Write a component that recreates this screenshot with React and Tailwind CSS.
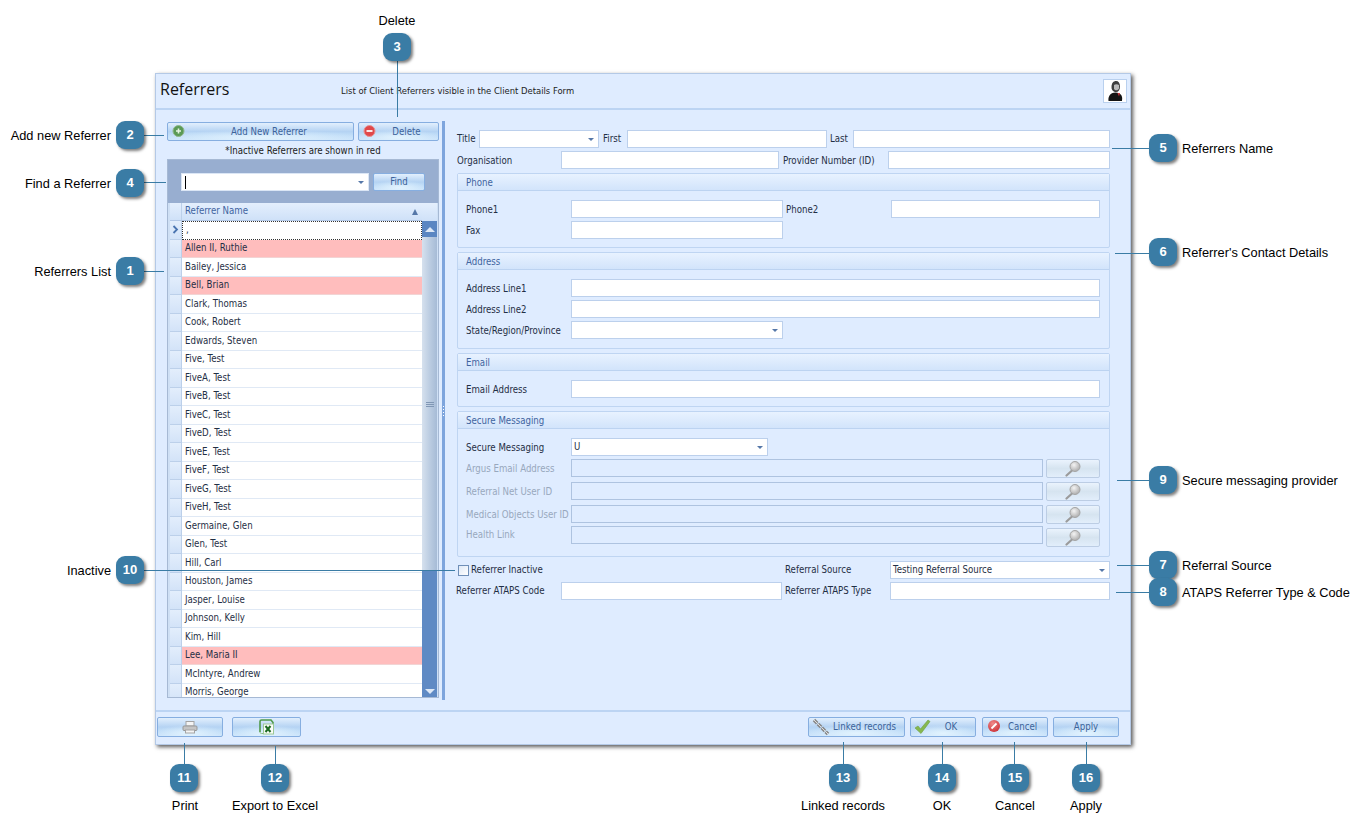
import React from 'react'

const names = [
  [',', 0], ['Allen II, Ruthie', 1], ['Bailey, Jessica', 0], ['Bell, Brian', 1], ['Clark, Thomas', 0], ['Cook, Robert', 0],
  ['Edwards, Steven', 0], ['Five, Test', 0], ['FiveA, Test', 0], ['FiveB, Test', 0], ['FiveC, Test', 0], ['FiveD, Test', 0],
  ['FiveE, Test', 0], ['FiveF, Test', 0], ['FiveG, Test', 0], ['FiveH, Test', 0], ['Germaine, Glen', 0], ['Glen, Test', 0],
  ['Hill, Carl', 0], ['Houston, James', 0], ['Jasper, Louise', 0], ['Johnson, Kelly', 0], ['Kim, Hill', 0], ['Lee, Maria II', 1],
  ['McIntyre, Andrew', 0], ['Morris, George', 0],
]

// callouts sit on top of the screenshot, so these are placed by hand
const badges = [
  ['2', 'left-[116px] top-[121px]'], ['4', 'left-[116px] top-[169px]'], ['1', 'left-[116px] top-[257px]'], ['10', 'left-[116px] top-[556px]'],
  ['3', 'left-[383px] top-[33px]'], ['5', 'left-[1149px] top-[134px]'], ['6', 'left-[1149px] top-[238px]'], ['9', 'left-[1149px] top-[466px]'],
  ['7', 'left-[1149px] top-[551px]'], ['8', 'left-[1149px] top-[578px]'], ['11', 'left-[170px] top-[764px]'], ['12', 'left-[261px] top-[764px]'],
  ['13', 'left-[829px] top-[764px]'], ['14', 'left-[928px] top-[764px]'], ['15', 'left-[1001px] top-[764px]'], ['16', 'left-[1072px] top-[764px]'],
]

const lines = [
  'left-[144px] top-[135px] w-[20px] h-px', 'left-[144px] top-[182px] w-[22px] h-px', 'left-[144px] top-[271px] w-[20px] h-px',
  'left-[144px] top-[570px] w-[311px] h-px', 'left-[397px] top-[60px] w-px h-[57px]', 'left-[1112px] top-[148px] w-[38px] h-px',
  'left-[1115px] top-[253px] w-[35px] h-px', 'left-[1117px] top-[480px] w-[33px] h-px', 'left-[1117px] top-[565px] w-[33px] h-px',
  'left-[1116px] top-[592px] w-[34px] h-px', 'left-[184px] top-[743px] w-px h-[22px]', 'left-[275px] top-[746px] w-px h-[19px]',
  'left-[843px] top-[742px] w-px h-[23px]', 'left-[942px] top-[742px] w-px h-[23px]', 'left-[1014px] top-[742px] w-px h-[23px]',
  'left-[1086px] top-[742px] w-px h-[23px]',
]

const leftLabels = [
  ['Add new Referrer', 'top-[128px]'], ['Find a Referrer', 'top-[176px]'], ['Referrers List', 'top-[264px]'], ['Inactive', 'top-[563px]'],
]
const rightLabels = [
  ['Referrers Name', 'top-[141px]'], ["Referrer's Contact Details", 'top-[245px]'], ['Secure messaging provider', 'top-[473px]'],
  ['Referral Source', 'top-[558px]'], ['ATAPS Referrer Type & Code', 'top-[585px]'],
]
const bottomLabels = [
  ['Print', 'left-[135px]'], ['Export to Excel', 'left-[225px]'], ['Linked records', 'left-[793px]'], ['OK', 'left-[892px]'],
  ['Cancel', 'left-[965px]'], ['Apply', 'left-[1036px]'],
]

const Label = ({ children, w }) => (
  <span className={`shrink-0 whitespace-nowrap text-[#1f2f45] ${w}`}>{children}</span>
)

const Input = ({ w, dim, children, className = '' }) => (
  <div className={`relative h-[18px] shrink-0 border flex items-center pl-[2px] text-[#1f2f45] ${w} ${dim ? 'bg-[#dfecff] border-[#aec3e0]' : 'bg-white border-[#bcd0ec]'} ${className}`}>
    {children}
  </div>
)

const Arrow = () => (
  <span className="absolute right-[4px] top-[7px] w-0 h-0 border-x-[3px] border-x-transparent border-t-[3px] border-t-[#5577a8]" />
)

const Button = ({ w, h = 'h-[20px]', icon, children }) => (
  <button className={`relative shrink-0 flex items-center justify-center rounded-[2px] border border-[#86aee0] bg-[radial-gradient(ellipse_55%_45%_at_50%_85%,#e2f3fe,transparent),linear-gradient(#e2effd,#b5d3f3_50%,#bbd9f6_62%,#cde5fb)] text-[#3c639a] ${w} ${h}`}>
    {icon}
    {children}
  </button>
)

const Group = ({ title, h, children }) => (
  <div className={`mt-[4px] border border-[#bfd5f2] rounded-[2px] ${h}`}>
    <div className="h-[17px] pl-[8px] pt-[3px] flex items-center bg-gradient-to-b from-[#e8f2ff] to-[#d2e4fb] border-b border-[#bcd3f1] text-[#3f64a0]">{title}</div>
    <div className="pl-[113px] relative">{children}</div>
  </div>
)

const Row = ({ label, className = '', children }) => (
  <div className={`flex items-center -ml-[105px] ${className}`}>
    <Label w="w-[105px] mt-[2px]">{label}</Label>
    {children}
  </div>
)

const Find = () => (
  <svg width="24" height="17" viewBox="0 0 24 17">
    <defs>
      <radialGradient id="lens" cx="0.4" cy="0.35" r="0.7"><stop offset="0" stopColor="#f4f4f4" /><stop offset="1" stopColor="#a9a9a9" /></radialGradient>
    </defs>
    <path d="M11 10.5 5.5 15.5" stroke="#9b9b9b" strokeWidth="2.2" strokeLinecap="round" />
    <circle cx="14" cy="6.5" r="5" fill="url(#lens)" stroke="#a5a5a5" />
  </svg>
)

const DimRow = ({ label, inputClass = '', labelClass = 'pt-[2px]' }) => (
  <div className="flex items-start h-[23px] -ml-[105px]">
    <span className={`w-[105px] h-[18px] flex items-center text-[#98a8bd] whitespace-nowrap ${labelClass}`}>{label}</span>
    <Input w="w-[472px]" dim className={inputClass} />
    <div className="ml-[3px] w-[54px] h-[19px] rounded-[2px] border border-[#bccde4] bg-gradient-to-b from-[#eaf3fd] via-[#d6e4f0] to-[#e2eefb] flex items-center justify-center">
      <Find />
    </div>
  </div>
)

function App() {
  return (
    <div className="relative w-[1366px] h-[829px] overflow-hidden bg-white font-['DejaVu_Sans_Condensed','Liberation_Sans',sans-serif] text-[9.6px]">
      <div className="pt-[73px] pl-[155px]">
        <div className="w-[976px] h-[672px] flex flex-col bg-[#dfecff] border border-[#b4c9e6] shadow-[2px_2px_4px_rgba(0,0,0,0.65)]">

          {/* title bar */}
          <div className="h-[36px] shrink-0 flex items-center pl-[4px] pr-[3px] border-b-2 border-[#bcd4f3]">
            <span className="w-[181px] -mt-[4px] font-['Open_Sans',sans-serif] font-medium text-[16px] text-[#111]">Referrers</span>
            <span className="text-[#222] text-[9.4px] flex-1">List of Client Referrers visible in the Client Details Form</span>
            <div className="w-[24px] h-[24px] bg-white border border-[#b9d0ee] flex items-center justify-center">
              <svg width="17" height="22" viewBox="0 0 17 22">
                <path d="M4.5 7c0-4 2-6 4.5-6s4 2 4 5.5S11.5 12 9 12 4.5 10.5 4.5 7z" fill="#3d3d3d" />
                <path d="M7 5c1-1 3.5-1 5 0v3.5c-.8 2-3.7 2.5-5 .5z" fill="#b9b9b9" />
                <path d="M1.5 21c0-1.500-.5-3 1-5.500 1-1.800 3.500-3 6-3s5 1.200 6 3c1.200 2.500.5 4 .5 5.500z" fill="#141414" />
                <path d="M10.5 13h2.500l-1 3.500z" fill="#c8333a" />
              </svg>
            </div>
          </div>

          {/* body */}
          <div className="flex-1 flex min-h-0 pl-[11px]">
            <div className="w-[272px] shrink-0 pt-[12px] flex flex-col">
              <div className="flex gap-[4px]">
                <Button w="w-[187px]" h="h-[19px]" icon={
                  <svg className="absolute left-[4px] top-[1px]" width="13" height="14" viewBox="0 0 13 14">
                    <circle cx="6.5" cy="7" r="5.5" fill="#5a9a55" stroke="#8fb68b" />
                    <path d="M6.5 4.5v5M4 7h5" stroke="#e5f2e2" strokeWidth="1.6" />
                  </svg>
                }><span className="pl-[17px] pt-[2px]">Add New Referrer</span></Button>
                <Button w="w-[81px]" h="h-[19px]" icon={
                  <svg className="absolute left-[4px] top-[1px]" width="13" height="14" viewBox="0 0 13 14">
                    <circle cx="6.5" cy="7" r="5.5" fill="#e0484a" stroke="#e79292" />
                    <path d="M3.5 7h6" stroke="#fbe5e5" strokeWidth="2" />
                  </svg>
                }><span className="pl-[16px] pt-[2px]">Delete</span></Button>
              </div>
              <div className="h-[18px] pt-[2px] flex items-center justify-center text-[#222]">*Inactive Referrers are shown in red</div>

              <div className="h-[539px] border border-[#a6b9d4] overflow-hidden bg-[#cfe0f5]">
                <div className="h-[43px] bg-[#98aed0] flex items-start pt-[13px] pl-[13px] gap-[4px]">
                  <Input w="w-[188px]" className="border-[#dbe6f5]">
                    <span className="w-px h-[13px] bg-black ml-[1px]" />
                    <Arrow />
                  </Input>
                  <Button w="w-[52px]" h="h-[18px]">Find</Button>
                </div>

                <div className="flex h-[495px] pl-[2px] pr-px">
                  <div className="flex-1 min-w-0 overflow-hidden">
                    <div className="flex h-[18px] bg-gradient-to-b from-[#e4effd] to-[#cfe1f8] border-b border-[#b3c8e6] text-[#3f64a0]">
                      <div className="w-[12px] border-r border-[#bcd0ea]" />
                      <div className="flex-1 flex items-center justify-between pl-[3px] pr-[4px]">
                        <span>Referrer Name</span>
                        <span className="w-0 h-0 border-x-[3px] border-x-transparent border-b-[6px] border-b-[#5577a8]" />
                      </div>
                    </div>
                    {names.map(([name, inactive], i) => (
                      <div key={i} className="flex h-[18.5px]">
                        <div className="w-[12px] shrink-0 bg-gradient-to-b from-[#e3eefc] to-[#d3e3f8] border-r border-b border-[#bcd0ea] flex items-center justify-center">
                          {i === 0 && (
                            <svg width="7" height="9" viewBox="0 0 7 9"><path d="M1.5 1 5 4.5 1.5 8" fill="none" stroke="#4a74b0" strokeWidth="1.8" /></svg>
                          )}
                        </div>
                        <div className={`flex-1 flex items-center pl-[3px] text-[#1f2f45] ${i === 0 ? 'bg-white border border-dotted border-[#333]' : inactive ? 'bg-[#ffbdbd] border-b border-[#f2d4d4]' : 'bg-white border-b border-[#e0e9f5]'}`}>
                          {name}
                        </div>
                      </div>
                    ))}
                  </div>

                  {/* scrollbar */}
                  <div className="w-[15px] shrink-0 flex flex-col bg-[#5f8ac4]">
                    <div className="h-[18px] bg-gradient-to-b from-[#e4effd] to-[#cfe1f8]" />
                    <div className="h-[16px] bg-[#5a86c2] flex items-center justify-center">
                      <span className="w-0 h-0 border-x-[5px] border-x-transparent border-b-[5px] border-b-[#dde8f6]" />
                    </div>
                    <div className="h-[334px] bg-gradient-to-r from-[#d6e1ee] via-[#bccde2] to-[#a6bbd6] flex flex-col items-center justify-center gap-[1px]">
                      <span className="w-[8px] h-px bg-[#8097b5]" />
                      <span className="w-[8px] h-px bg-[#8097b5]" />
                      <span className="w-[8px] h-px bg-[#8097b5]" />
                    </div>
                    <div className="flex-1" />
                    <div className="h-[14px] flex items-center justify-center">
                      <span className="w-0 h-0 border-x-[5px] border-x-transparent border-t-[5px] border-t-[#dde8f6]" />
                    </div>
                  </div>
                </div>
              </div>
            </div>

            {/* splitter */}
            <div className="ml-[3px] mt-[11px] mb-[10px] w-[3px] shrink-0 bg-[#7ea5dd] flex flex-col items-center justify-center gap-[2px]">
              <span className="w-px h-px bg-white" /><span className="w-px h-px bg-white" /><span className="w-px h-px bg-white" /><span className="w-px h-px bg-white" />
            </div>

            {/* form */}
            <div className="ml-[12px] w-[653px] shrink-0 pt-[20px]">
              <div className="flex items-center">
                <Label w="w-[22px]">Title</Label>
                <Input w="w-[120px]"><Arrow /></Input>
                <Label w="w-[28px] pl-[4px]">First</Label>
                <Input w="w-[200px]" />
                <Label w="w-[26px] pl-[3px]">Last</Label>
                <Input w="w-[257px]" />
              </div>
              <div className="flex items-center mt-[3px]">
                <Label w="w-[104px] mt-[2px]">Organisation</Label>
                <Input w="w-[218px]" />
                <Label w="w-[109px] pl-[4px] mt-[2px]">Provider Number (ID)</Label>
                <Input w="w-[222px]" />
              </div>

              <Group title="Phone" h="h-[75px]">
                <Row label="Phone1" className="mt-[9px]">
                  <Input w="w-[212px]" />
                  <Label w="w-[108px] pl-[3px] mt-[2px]">Phone2</Label>
                  <Input w="w-[209px]" />
                </Row>
                <Row label="Fax" className="mt-[3px]"><Input w="w-[212px]" /></Row>
              </Group>

              <Group title="Address" h="h-[97px]">
                <Row label="Address Line1" className="mt-[9px]"><Input w="w-[529px]" /></Row>
                <Row label="Address Line2" className="mt-[3px]"><Input w="w-[529px]" /></Row>
                <Row label="State/Region/Province" className="mt-[3px]"><Input w="w-[212px]"><Arrow /></Input></Row>
              </Group>

              <Group title="Email" h="h-[54px]">
                <Row label="Email Address" className="mt-[9px]"><Input w="w-[529px]" /></Row>
              </Group>

              <Group title="Secure Messaging" h="h-[146px]">
                <Row label="Secure Messaging" className="mt-[9px] mb-[3px]"><Input w="w-[197px]">U<Arrow /></Input></Row>
                <DimRow label="Argus Email Address" />
                <DimRow label="Referral Net User ID" />
                <DimRow label="Medical Objects User ID" />
                <DimRow label="Health Link" inputClass="-mt-[2px]" labelClass="-mt-[2px]" />
              </Group>

              <div className="flex items-center mt-[4px]">
                <span className="w-[11px] h-[11px] border border-[#6f8fb8] bg-gradient-to-br from-[#dfe9f6] to-white ml-[1px] mr-[2px]" />
                <Label w="w-[314px]">Referrer Inactive</Label>
                <Label w="w-[105px]">Referral Source</Label>
                <Input w="w-[220px]">Testing Referral Source<Arrow /></Input>
              </div>
              <div className="flex items-center mt-[3px] -ml-px">
                <Label w="w-[105px]">Referrer ATAPS Code</Label>
                <Input w="w-[221px]" />
                <Label w="w-[108px] pl-[3px]">Referrer ATAPS Type</Label>
                <Input w="w-[220px]" />
              </div>
            </div>
          </div>

          {/* footer */}
          <div className="h-[34px] shrink-0 flex items-start pt-[5px] pl-[1px] pr-[11px] border-t-2 border-[#bcd4f3]">
            <Button w="w-[66px]" icon={
              <svg width="16" height="13" viewBox="0 0 16 13">
                <rect x="4" y="0.5" width="8" height="4.5" fill="#f4f4f4" stroke="#a3a3a3" />
                <rect x="1" y="5" width="14" height="4.5" rx="1" fill="#c4c4c4" stroke="#979797" />
                <rect x="3.5" y="9" width="9" height="3" fill="#f5f5f5" stroke="#a3a3a3" />
              </svg>
            } />
            <div className="w-[9px]" />
            <Button w="w-[69px]" icon={
              <svg width="15" height="16" viewBox="0 0 15 16">
                <path d="M1 13V2.500C1 1.500 1.500 1 2.500 1H12l2 2.500V5" fill="none" stroke="#4f9a4a" strokeWidth="1.600" />
                <path d="M1 13c0 1 .5 1.500 1.500 1.500H5" fill="none" stroke="#8cc086" />
                <rect x="4.500" y="5" width="10" height="10" fill="#fbfdf9" stroke="#9cc895" />
                <path d="M6.500 7 11.500 13M11.500 7 6.500 13" stroke="#1d6b22" strokeWidth="2" />
              </svg>
            } />
            <div className="flex-1" />
            <Button w="w-[97px]" icon={
              <svg className="absolute left-[3px] top-[0px]" width="18" height="18" viewBox="0 0 18 18">
                <path d="M2 2 16 16" stroke="#8a8a8a" strokeWidth="3.5" strokeDasharray="4.5 1" />
                <path d="M2 2 16 16" stroke="#dedede" strokeWidth="1" strokeDasharray="4.5 1" />
              </svg>
            }><span className="pl-[16px]">Linked records</span></Button>
            <div className="w-[5px]" />
            <Button w="w-[66px]" icon={
              <svg className="absolute left-[3px] top-[0px]" width="17" height="17" viewBox="0 0 17 17">
                <path d="M1 10 4 8 6.500 11 14 2 16 3.500 7 15.500z" fill="#86b84f" stroke="#6f9f42" strokeWidth="0.6" />
              </svg>
            }><span className="pl-[16px]">OK</span></Button>
            <div className="w-[6px]" />
            <Button w="w-[66px]" icon={
              <svg className="absolute left-[4px] top-[1px]" width="14" height="14" viewBox="0 0 14 14">
                <defs>
                  <radialGradient id="stop" cx="0.4" cy="0.3" r="0.8"><stop offset="0" stopColor="#f08a8a" /><stop offset="1" stopColor="#c92a30" /></radialGradient>
                </defs>
                <circle cx="7" cy="7" r="6" fill="url(#stop)" />
                <path d="M4.500 9.500 9.500 4.500" stroke="#fff" strokeWidth="1.8" />
              </svg>
            }><span className="pl-[15px]">Cancel</span></Button>
            <div className="w-[5px]" />
            <Button w="w-[66px]">Apply</Button>
          </div>
        </div>
      </div>

      {/* callouts */}
      {lines.map(c => <div key={c} className={`absolute bg-[#3a7ca5] ${c}`} />)}
      {badges.map(([n, c]) => (
        <div key={n} className={`absolute w-[28px] h-[28px] rounded-[9px] bg-[#3a7ca5] shadow-[2px_2px_3px_rgba(0,0,0,0.5)] flex items-center justify-center font-['Liberation_Sans',sans-serif] font-bold text-[13px] text-white ${c}`}>{n}</div>
      ))}
      <div className="absolute left-[347px] top-[13px] w-[100px] text-center font-['Liberation_Sans',sans-serif] text-[12.8px] leading-[16px] text-black">Delete</div>
      {leftLabels.map(([t, c]) => (
        <div key={t} className={`absolute left-[0px] w-[111px] text-right whitespace-nowrap font-['Liberation_Sans',sans-serif] text-[12.8px] leading-[16px] text-black ${c}`}>{t}</div>
      ))}
      {rightLabels.map(([t, c]) => (
        <div key={t} className={`absolute left-[1182px] whitespace-nowrap font-['Liberation_Sans',sans-serif] text-[12.8px] leading-[16px] text-black ${c}`}>{t}</div>
      ))}
      {bottomLabels.map(([t, c]) => (
        <div key={t} className={`absolute top-[798px] w-[100px] text-center font-['Liberation_Sans',sans-serif] text-[12.8px] leading-[16px] text-black ${c}`}>{t}</div>
      ))}
    </div>
  )
}

export default App
